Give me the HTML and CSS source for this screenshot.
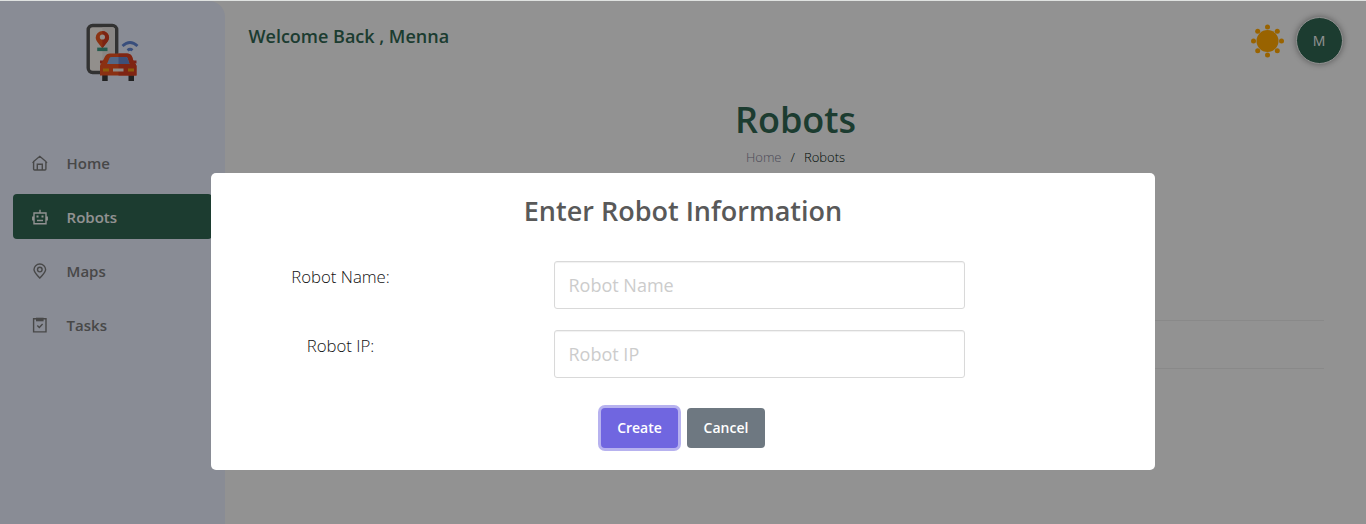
FILE: index.html
```html
<!DOCTYPE html>
<html lang="en">
<head>
<meta charset="utf-8">
<title>Robots</title>
<link rel="stylesheet" href="styles.css">
</head>
<body>
<div class="app">
  <aside class="sidebar">
    <svg class="logo" width="54" height="60" viewBox="0 0 54 60">
      <rect x="3.200" y="2.500" width="28.500" height="47" rx="4.500" fill="#f4eeea" stroke="#545454" stroke-width="3.400"/>
      <path d="M17.400 4.200h10q2.500 0 2.500 3V48H17.400z" fill="#e4dfdd"/>
      <path d="M17.400 25.500C14 20.500 10.700 18 10.700 14.500a6.700 6.500 0 0 1 13.400 0c0 3.500-3.500 6-6.700 11z" fill="#e8561f"/>
      <path d="M17.400 25.500V8a6.700 6.500 0 0 1 6.700 6.500c0 3.500-3.500 6-6.700 11z" fill="#cf3d20"/>
      <circle cx="17.400" cy="14" r="2.600" fill="#f4eeea"/>
      <rect x="12.200" y="24.600" width="10.300" height="3.500" fill="#409780"/>
      <g fill="none" stroke="#5f83cf" stroke-width="2.800">
        <path d="M37.500 23q7.500-7 15 0"/>
        <path d="M42.500 27.300q2.700-2 5 0"/>
      </g>
      <path d="M17.200 52h5.500v6h-5.500zM43.500 52H49v6h-5.500z" fill="#383838"/>
      <path d="M15 37.500h7v3h-7zM45 37.500h6.500v3H45z" fill="#cc3a28"/>
      <path d="M15 52.500V43q0-2 2-3.500l3-6Q21.500 30.500 25 30.500h17q3.500 0 5 3l2 6q2.500 1.500 2.500 3.500v9.500z" fill="#e8501f"/>
      <path d="M33.500 30.500H42q3.500 0 5 3l2 6q2.500 1.500 2.500 3.500v9.500h-18z" fill="#d43f21"/>
      <path d="M22 41l2.500-6q.5-1 2-1h14q1.500 0 2 1l2 6z" fill="#8bacdf"/>
      <path d="M33.500 34h7q1.500 0 2 1l2 6h-11z" fill="#6684c9"/>
      <path d="M18 45.500h6v3h-6zM43 45.500h6v3h-6z" fill="#e89c13"/>
      <path d="M28 45.500h10.500v3H28z" fill="#f1e7de"/>
    </svg>
    <nav class="menu">
      <a class="item">
        <svg class="icon" viewBox="0 0 16 16"><path d="M1.600 6.500V14q0 1 1 1h10.300q1 0 1-1V6.500L7.800 1.300zM5.300 15V9.300h5V15M.6 8l1.500-1.500M15 8l-1.500-1.500"/></svg>
        <span>Home</span>
      </a>
      <a class="item active">
        <svg class="icon" viewBox="0 0 16 16"><path d="M2 4h12v10.800H2zM8 4V.8M.8 7.500v4M15.200 7.500v4M5 11.500h6"/><path d="M4.500 6.500h2v2h-2zM9.500 6.500h2v2h-2z" class="solid"/></svg>
        <span>Robots</span>
      </a>
      <a class="item">
        <svg class="icon" viewBox="0 0 16 16"><path d="M7.800 15C5 11.600 2 9.800 2 6.600a5.800 5.600 0 0 1 11.600 0C13.600 9.800 10.600 11.600 7.800 15z"/><circle cx="7.800" cy="6.600" r="2.300"/></svg>
        <span>Maps</span>
      </a>
      <a class="item">
        <svg class="icon" viewBox="0 0 16 16"><path d="M1.600 1.700H14v13.200H1.600zM5.300 8.500l2 1.900 3.300-3.300"/><path d="M4 .7h7.600v3.600H4z" class="solid"/></svg>
        <span>Tasks</span>
      </a>
    </nav>
  </aside>
  <main class="main">
    <header class="topbar">
      <h2 class="welcome">Welcome Back , Menna</h2>
      <div class="tools">
        <svg class="sun" width="34" height="34" viewBox="-17.500 -17 34 34">
          <circle r="11"/><circle cy="-14" r="2.500"/><circle cy="14" r="2.500"/><circle cx="-14" r="2.500"/><circle cx="14" r="2.500"/>
          <circle cx="-9.800" cy="-9.800" r="2.500"/><circle cx="9.800" cy="-9.800" r="2.500"/><circle cx="-9.800" cy="9.800" r="2.500"/><circle cx="9.800" cy="9.800" r="2.500"/>
        </svg>
        <div class="avatar">M</div>
      </div>
    </header>
    <h1 class="title">Robots</h1>
    <div class="crumbs"><span class="parent">Home</span><span>/</span><span>Robots</span></div>
    <div class="table"><div class="row"></div></div>
  </main>
</div>
<div class="overlay">
  <form class="modal">
    <h2 class="heading">Enter Robot Information</h2>
    <div class="field"><label for="name">Robot Name:</label><input id="name" placeholder="Robot Name"></div>
    <div class="field"><label for="ip">Robot IP:</label><input id="ip" placeholder="Robot IP"></div>
    <div class="actions">
      <button type="button" class="btn create">Create</button>
      <button type="button" class="btn cancel">Cancel</button>
    </div>
  </form>
</div>
</body>
</html>
```
FILE: styles.css
```css
* { box-sizing: border-box; }
body {
  margin: 0;
  height: 524px;
  overflow: hidden;
  background: #f3f3f3;
  font-family: "Open Sans", "Noto Sans", sans-serif;
  border-top: 1px solid #dfe2e0;
}
h1, h2 { margin: 0; }
.app { display: flex; height: 523px; }
.sidebar {
  width: 225px;
  background: #e4e9f8;
  border-top-right-radius: 16px;
}
.logo { display: block; margin: 22px 0 0 85px; }
.menu {
  display: flex;
  flex-direction: column;
  gap: 9px;
  margin: 57px 13px 0;
}
.item {
  display: flex;
  align-items: center;
  gap: 19px;
  height: 45px;
  padding-left: 18.600px;
  border-radius: 4px;
  color: #787878;
  font-size: 15px;
  font-weight: 600;
}
.item.active { background: #2f6450; color: #f3f3f3; }
.icon {
  width: 16px;
  height: 16px;
  fill: none;
  stroke: currentColor;
  stroke-width: 1.4;
}
.solid { fill: currentColor; stroke: none; }
.main { flex: 1; }
.topbar {
  display: flex;
  justify-content: space-between;
  height: 96px;
  padding: 16px 23px 0 23.500px;
}
.welcome {
  margin-top: 7px;
  font-size: 18px;
  line-height: 25px;
  font-weight: 600;
  color: #2f6450;
}
.tools { display: flex; gap: 12px; }
.sun { margin-top: 6.500px; fill: #ffa600; }
.avatar {
  width: 47px;
  height: 47px;
  padding-right: 1px;
  border: 1px solid #f3f3f3;
  border-radius: 50%;
  background: #2f6450;
  color: #f3f3f3;
  font-size: 14px;
  line-height: 46px;
  text-align: center;
  box-shadow: 0 0 6px rgba(0, 0, 0, .4);
}
.title {
  font-size: 36px;
  line-height: 46px;
  font-weight: 600;
  text-align: center;
  color: #2f6450;
}
.crumbs {
  display: flex;
  justify-content: center;
  gap: 9px;
  margin-top: 5px;
  font-size: 13px;
  line-height: 18px;
  font-weight: 300;
  color: #00140c;
}
.parent { color: #7f7d94; }
.table { margin: 154px 42px 0; border-top: 1px solid #e4e4e4; }
.row { height: 48px; border-bottom: 1px solid #e4e4e4; }
.overlay {
  position: absolute;
  inset: 1px 0 0;
  padding-top: 172px;
  background: rgba(0, 0, 0, .4);
}
.modal {
  width: 944px;
  height: 297px;
  margin: 0 auto;
  padding: 20px 0 0;
  border-radius: 5px;
  background: #fff;
}
.heading {
  margin-bottom: 32px;
  font-size: 27px;
  line-height: 36px;
  font-weight: 600;
  text-align: center;
  color: #595959;
}
.field {
  display: flex;
  height: 48px;
  margin-bottom: 21px;
}
.field label {
  width: 259px;
  margin-right: 84px;
  padding-top: 5px;
  text-align: center;
  font-size: 16.800px;
  line-height: 22px;
  font-weight: 300;
  color: #111;
}
.field input {
  width: 411px;
  height: 48px;
  padding: 0 13.500px;
  border: 1px solid #d9d9d9;
  border-radius: 3px;
  box-shadow: inset 0 1px 1px rgba(0, 0, 0, .06);
  font: 18px "Open Sans", sans-serif;
}
.field input::placeholder { color: #ccc; }
.actions {
  display: flex;
  justify-content: center;
  gap: 9px;
  margin-top: 30px;
}
.btn {
  width: 78px;
  height: 40px;
  padding: 0 0 2px;
  border: 0;
  border-radius: 4px;
  color: #fff;
  font: 600 14px "Open Sans", sans-serif;
}
.create { width: 77px; background: #7066e0; box-shadow: 0 0 0 3px rgba(112, 102, 224, .5); }
.cancel { background: #6e7881; }
```
